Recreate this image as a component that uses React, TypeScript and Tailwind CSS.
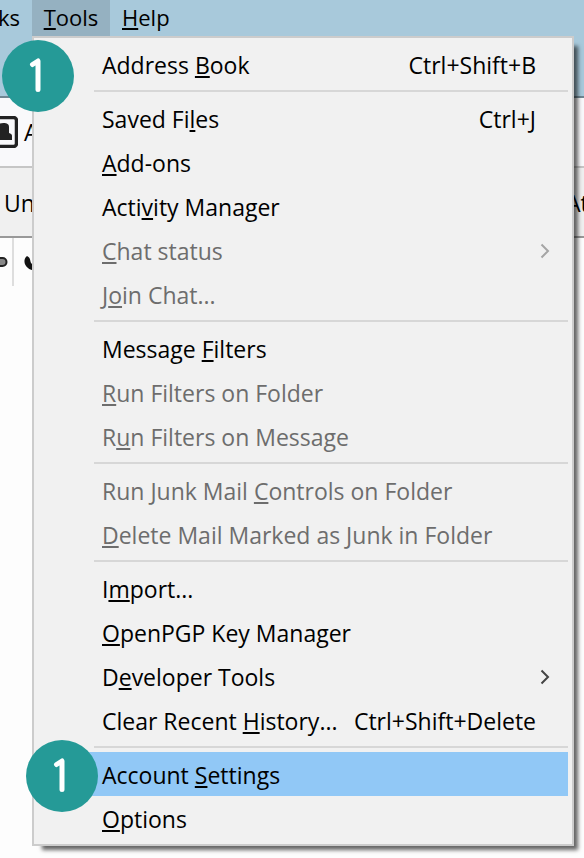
import { Fragment } from "react";

type Item = {
  label: string;
  // index of the access key letter in the label
  key: number;
  shortcut?: string;
  submenu?: boolean;
  disabled?: boolean;
  active?: boolean;
};

const groups: Item[][] = [
  [{ label: "Address Book", key: 8, shortcut: "Ctrl+Shift+B" }],
  [
    { label: "Saved Files", key: 8, shortcut: "Ctrl+J" },
    { label: "Add-ons", key: 0 },
    { label: "Activity Manager", key: 4 },
    { label: "Chat status", key: 0, submenu: true, disabled: true },
    { label: "Join Chat...", key: 1, disabled: true },
  ],
  [
    { label: "Message Filters", key: 8 },
    { label: "Run Filters on Folder", key: 0, disabled: true },
    { label: "Run Filters on Message", key: 1, disabled: true },
  ],
  [
    { label: "Run Junk Mail Controls on Folder", key: 14, disabled: true },
    { label: "Delete Mail Marked as Junk in Folder", key: 0, disabled: true },
  ],
  [
    { label: "Import...", key: 1 },
    { label: "OpenPGP Key Manager", key: 0 },
    { label: "Developer Tools", key: 1, submenu: true },
    { label: "Clear Recent History...", key: 13, shortcut: "Ctrl+Shift+Delete" },
  ],
  [
    { label: "Account Settings", key: 8, active: true },
    { label: "Options", key: 0 },
  ],
];

function AccessLabel({ text, index }: { text: string; index: number }) {
  return (
    <span className="whitespace-pre">
      {text.slice(0, index)}
      <span className="underline decoration-2 underline-offset-2 [text-decoration-skip-ink:none]">
        {text[index]}
      </span>
      {text.slice(index + 1)}
    </span>
  );
}

function MenuRow({ item }: { item: Item }) {
  return (
    <button
      role="menuitem"
      disabled={item.disabled}
      className={`flex h-11 w-full items-center justify-between pt-0.5 pr-8 pl-16 text-left ${
        item.active ? "bg-[#91c8f6]" : ""
      } ${item.disabled ? "text-[#6d6d6d]" : "text-black"}`}
    >
      <AccessLabel text={item.label} index={item.key} />
      {item.shortcut && <span className="whitespace-nowrap">{item.shortcut}</span>}
      {item.submenu && (
        <svg
          viewBox="0 0 10 16"
          className={`-mr-3.5 h-4 w-[10px] ${item.disabled ? "text-[#a5a5a5]" : "text-[#444]"}`}
          fill="none"
          stroke="currentColor"
          strokeWidth="2"
        >
          <path d="M1.500 1.500 8 8l-6.500 6.500" />
        </svg>
      )}
    </button>
  );
}

function StepBadge() {
  return (
    <svg viewBox="0 0 72 72" className="size-[72px]" role="img" aria-label="Step 1">
      <circle cx="36" cy="36" r="36" fill="#259a97" />
      <path
        d="M30.500 24.500 36 21V49.500"
        fill="none"
        stroke="#fff"
        strokeWidth="5"
        strokeLinecap="round"
        strokeLinejoin="round"
      />
    </svg>
  );
}

export default function App() {
  return (
    <div className="relative min-h-screen overflow-hidden bg-[#fdfdfd] font-['Open_Sans','Noto_Sans',sans-serif] text-[23px] leading-8 text-black">
      <header className="h-[98px] border-b-2 border-[#708692] bg-[#a8c9db]">
        <nav className="flex h-9 items-center text-[22px]">
          <a href="#bookmarks" className="flex h-9 w-8 items-center justify-end pr-3 pb-0.5">
            ks
          </a>
          <a href="#tools" className="flex h-9 w-[78px] items-center justify-center bg-[#95b1c1] pb-0.5">
            <AccessLabel text="Tools" index={0} />
          </a>
          <a href="#help" className="flex h-9 items-center px-3 pb-0.5">
            <AccessLabel text="Help" index={0} />
          </a>
        </nav>
      </header>

      {/* Toolbar */}
      <div className="flex h-[70px] items-center border-b-2 border-[#c6c6c6] bg-[#f9f9fb]">
        <svg viewBox="0 0 18 32" className="h-8 w-[18px]" fill="none">
          <rect x="-14" y="1.500" width="30.500" height="29" rx="3" stroke="#222" strokeWidth="3.500" />
          <path d="M-7 24v-4c0-2 3-2 5-3V11c0-3 2-4 5.500-4S9 8 9 11v6c2 1 3 1 3 3v4z" fill="#222" />
        </svg>
        <span className="pl-1.5">A</span>
      </div>

      {/* Quick filter bar */}
      <div className="flex h-[70px] items-center justify-between border-b-2 border-[#999] bg-[#f0f0f0] pt-0.5">
        <span className="pl-1">Un</span>
        <span className="w-[18px]">At</span>
      </div>

      {/* Thread column headers */}
      <div className="flex h-12 items-center">
        <svg viewBox="0 0 12 16" className="h-4 w-3">
          <rect x="-6" y="4" width="12.500" height="8" rx="4" fill="#888" stroke="#222" strokeWidth="2" />
        </svg>
        <div className="h-full w-0.5 bg-[#dedede]" />
        <svg viewBox="0 0 24 24" className="ml-2 size-6">
          <path d="M5 6c-4 3-3 9 1 12 4 4 12 2 13-4l-5-6c1 4-1 6-3 6-4 0-1-6-6-8z" fill="#111" />
        </svg>
      </div>

      <div
        role="menu"
        aria-label="Tools"
        className="absolute top-9 right-[10px] left-8 border-2 border-[#ccc] bg-[#f1f1f1] p-1 shadow-[7px_7px_4px_-3px_rgba(0,0,0,0.6)]"
      >
        {groups.map((items, i) => (
          <Fragment key={i}>
            {i > 0 && <hr className="my-1 ml-14 border-t-2 border-[#d7d7d7]" />}
            {items.map((item) => (
              <MenuRow key={item.label} item={item} />
            ))}
          </Fragment>
        ))}
      </div>

      <div className="absolute top-10 left-0.5">
        <StepBadge />
      </div>
      <div className="absolute top-[740px] left-[26px]">
        <StepBadge />
      </div>
    </div>
  );
}
